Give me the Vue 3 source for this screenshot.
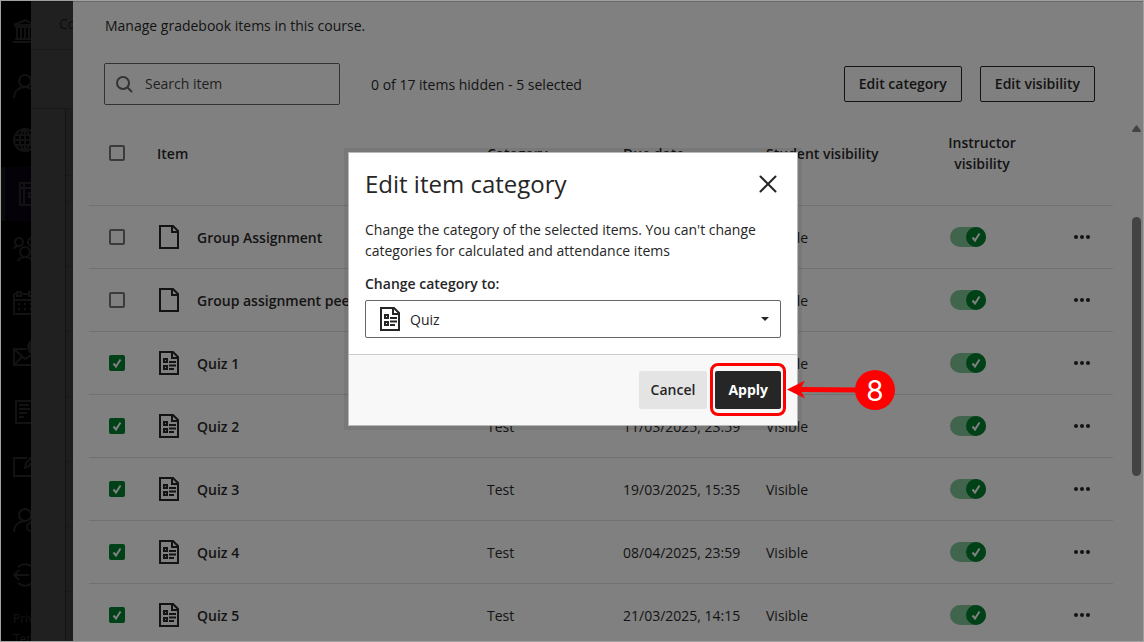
<template>
    <div class="screen">
        <nav class="rail" aria-label="Main">
            <ul class="rail__list">
                <li
                    v-for="item in railItems"
                    :key="item.name"
                    class="rail__item"
                    :class="{ 'rail__item--active': item.active }"
                >
                    <a href="#" class="rail__link" :aria-label="item.name">
                        <svg class="rail__icon" viewBox="0 0 24 24">
                            <path :d="item.path" />
                            <circle v-if="item.badge" class="rail__badge" cx="22" cy="2" r="8" />
                        </svg>
                    </a>
                </li>
            </ul>
            <a href="#" class="rail__text">Privacy</a>
            <a href="#" class="rail__text">Terms</a>
        </nav>

        <div class="course">
            <div class="course__title">Co</div>
            <div class="course__tabs"></div>
            <div class="course__grid">
                <div v-for="n in 9" :key="n" class="course__cell"></div>
            </div>
        </div>

        <main class="panel">
            <p class="panel__intro">Manage gradebook items in this course.</p>

            <div class="toolbar">
                <label class="search">
                    <svg class="search__icon" viewBox="0 0 18 18">
                        <circle cx="8" cy="8" r="6" />
                        <path d="M12.500 12.500 17 17" />
                    </svg>
                    <input
                        v-model="search"
                        class="search__input"
                        type="text"
                        placeholder="Search item"
                        aria-label="Search item"
                    />
                </label>
                <span class="toolbar__status">0 of 17 items hidden - {{ selectedCount }} selected</span>
                <div class="toolbar__actions">
                    <button type="button" class="outline-btn">Edit category</button>
                    <button type="button" class="outline-btn">Edit visibility</button>
                </div>
            </div>

            <div class="panel__body">
                <table class="items">
                    <colgroup>
                        <col class="col-check" />
                        <col />
                        <col class="col-category" />
                        <col class="col-due" />
                        <col class="col-student" />
                        <col class="col-instructor" />
                        <col class="col-menu" />
                    </colgroup>
                    <thead>
                        <tr>
                            <th class="cell-check">
                                <label class="check">
                                    <input type="checkbox" class="check__input" aria-label="Select all items" />
                                </label>
                            </th>
                            <th>Item</th>
                            <th>Category</th>
                            <th>Due date</th>
                            <th>Student visibility</th>
                            <th><span class="items__wrap">Instructor visibility</span></th>
                            <th></th>
                        </tr>
                    </thead>
                    <tbody>
                        <tr v-for="row in rows" :key="row.name">
                            <td class="cell-check">
                                <label class="check">
                                    <input v-model="row.selected" type="checkbox" class="check__input" :aria-label="row.name" />
                                    <svg v-if="row.selected" class="check__mark" viewBox="0 0 16 16">
                                        <path d="M4.5 8.5 7 11.5 11.5 4.5" />
                                    </svg>
                                </label>
                            </td>
                            <td>
                                <div class="item">
                                    <svg class="doc-icon" viewBox="0 0 20 24">
                                        <path d="M1 1H14L19 6V23H1ZM13 1V7H19" />
                                        <path v-if="row.quiz" d="M5 8H8V11H5ZM5 15H8V18H5ZM10 11H17M10 14.500H17M10 18H15" />
                                    </svg>
                                    <span class="item__name">{{ row.name }}</span>
                                </div>
                            </td>
                            <td>{{ row.category }}</td>
                            <td>{{ row.due }}</td>
                            <td>Visible</td>
                            <td class="cell-toggle">
                                <label class="toggle">
                                    <input
                                        v-model="row.shown"
                                        type="checkbox"
                                        role="switch"
                                        class="toggle__input"
                                        :aria-label="`${row.name} instructor visibility`"
                                    />
                                    <svg class="toggle__knob" viewBox="0 0 20 20">
                                        <circle cx="10" cy="10" r="10" />
                                        <path d="M6.500 10.500 9 13.500 13.500 6.500" />
                                    </svg>
                                </label>
                            </td>
                            <td class="cell-menu">
                                <button type="button" class="more" :aria-label="`More options for ${row.name}`">
                                    <svg class="more__icon" viewBox="0 0 16 4">
                                        <circle cx="2" cy="2" r="2" />
                                        <circle cx="8" cy="2" r="2" />
                                        <circle cx="14" cy="2" r="2" />
                                    </svg>
                                </button>
                            </td>
                        </tr>
                    </tbody>
                </table>

                <div class="scrollbar">
                    <svg class="scrollbar__arrow" viewBox="0 0 9 7">
                        <path d="M3.500 1Q4.500-.5 5.500 1L9 6Q9 7 8 7H1Q0 7 0 6Z" />
                    </svg>
                    <div class="scrollbar__thumb"></div>
                </div>
            </div>
        </main>

        <section class="dialog" role="dialog" aria-labelledby="dialog-title">
            <header class="dialog__header">
                <h2 id="dialog-title" class="dialog__title">Edit item category</h2>
                <button type="button" class="dialog__close" aria-label="Close">
                    <svg viewBox="0 0 18 18">
                        <path d="M1.500 1.500 16.500 16.500M16.500 1.500 1.500 16.500" />
                    </svg>
                </button>
            </header>
            <div class="dialog__body">
                <p class="dialog__text">
                    Change the category of the selected items. You can't change categories for calculated and attendance items
                </p>
                <label class="dialog__label" for="category">Change category to:</label>
                <div class="picker">
                    <select id="category" v-model="category" class="picker__select">
                        <option>Quiz</option>
                        <option>Test</option>
                    </select>
                    <svg class="doc-icon picker__icon" viewBox="0 0 20 24">
                        <path d="M1 1H14L19 6V23H1ZM13 1V7H19" />
                        <path d="M5 8H8V11H5ZM5 15H8V18H5ZM10 11H17M10 14.500H17M10 18H15" />
                    </svg>
                    <svg class="picker__caret" viewBox="0 0 8 4">
                        <path d="M0 0H8L4 4Z" />
                    </svg>
                </div>
            </div>
            <footer class="dialog__footer">
                <button type="button" class="btn">Cancel</button>
                <div class="step">
                    <button type="button" class="btn btn--primary">Apply</button>
                    <span class="step__ring"></span>
                    <div class="step__callout">
                        <svg class="step__arrow" viewBox="0 0 72 20">
                            <path d="M0 9.500 18 .5 14.500 7 72 7.500V12.500L14.500 12 18 18.500Z" />
                        </svg>
                        <span class="step__number">8</span>
                    </div>
                </div>
            </footer>
        </section>
    </div>
</template>

<script setup>
import { ref, computed } from 'vue'

const search = ref('')
const category = ref('Quiz')

const rows = ref([
    { name: 'Group Assignment', category: '', due: '', quiz: false, selected: false, shown: true },
    { name: 'Group assignment peer', category: '', due: '', quiz: false, selected: false, shown: true },
    { name: 'Quiz 1', category: 'Test', due: '', quiz: true, selected: true, shown: true },
    { name: 'Quiz 2', category: 'Test', due: '11/03/2025, 23:59', quiz: true, selected: true, shown: true },
    { name: 'Quiz 3', category: 'Test', due: '19/03/2025, 15:35', quiz: true, selected: true, shown: true },
    { name: 'Quiz 4', category: 'Test', due: '08/04/2025, 23:59', quiz: true, selected: true, shown: true },
    { name: 'Quiz 5', category: 'Test', due: '21/03/2025, 14:15', quiz: true, selected: true, shown: true }
])

const selectedCount = computed(() => rows.value.filter((row) => row.selected).length)

const railItems = [
    { name: 'Institution', path: 'M1 6 12 1 23 6ZM2 8H22M4 9V19M8 9V19M12 9V19M16 9V19M20 9V19M2 20H22M0 23H24' },
    { name: 'Profile', path: 'M6 7A6 6 0 1 0 18 7A6 6 0 1 0 6 7M1 24C1 17 6 13 12 13S23 17 23 24' },
    { name: 'Activity', path: 'M1 12A11 11 0 1 0 23 12A11 11 0 1 0 1 12M12 1V23M1 12H23M3 7H21M3 17H21M12 1C5 7 5 17 12 23M12 1C19 7 19 17 12 23' },
    { name: 'Courses', path: 'M7 1H29V23H7ZM11 1V23M7 6H29M20 11H16V15H20', active: true },
    { name: 'Organisations', path: 'M2 5A4 4 0 1 0 10 5A4 4 0 1 0 2 5M15 5A4 4 0 1 0 23 5A4 4 0 1 0 15 5M7 15A5 5 0 1 0 17 15A5 5 0 1 0 7 15M1 12C1 10 3 9 6 9M5 24C6 21 9 20 12 20S18 21 19 24' },
    { name: 'Calendar', path: 'M1 3H4M8 3H16M20 3H23V23H1V3M1 9H23M4 1H8V5H4ZM16 1H20V5H16ZM5 13H7M11 13H13M17 13H19M5 18H7M11 18H13M17 18H19' },
    { name: 'Messages', path: 'M13 4H1V20H23V12M2 5 12 14 20 9M2 19 9 12', badge: true },
    { name: 'Grades', path: 'M18 23H3V1H20V17M6 5H16M6 9H17M6 13H14M6 17H11M18 20H20' },
    { name: 'Assist', path: 'M14 4H1V22H23V13M12 14 13 9 21 1 24 4 16 12Z' },
    { name: 'Tools', path: 'M6 7A6 6 0 1 0 18 7A6 6 0 1 0 6 7M1 24C1 17 6 13 12 13M14 19A4 4 0 1 0 22 19A4 4 0 1 0 14 19M18 13V15' },
    { name: 'Sign out', path: 'M5 4C12-2 23 3 23 12S12 26 5 20M16 12H1M6 7 1 12 6 17' }
]
</script>

<style>
body {
    background: #808080;
}
</style>

<style scoped>
.screen {
    position: relative;
    display: grid;
    grid-template-columns: 30px 42px minmax(0, 1fr);
    box-sizing: border-box;
    height: 100vh;
    overflow: hidden;
    border: 1px solid #a0a0a0;
    color: #131313;
    font-family: "Open Sans", "Noto Sans", sans-serif;
    font-size: 14px;
    line-height: 21px;
}

button,
input,
select {
    font: inherit;
    color: inherit;
}

/* Side rail */
.rail {
    padding-top: 3px;
    overflow: hidden;
    background: #000;
}

.rail__list {
    display: grid;
    grid-auto-rows: 1fr;
    height: 598px;
    margin: 0 0 7px;
    padding: 0;
    list-style: none;
}

.rail__item {
    box-sizing: border-box;
    border-left: 4px solid #000;
}

.rail__item--active {
    border-left-color: #080c09;
    background: #040208;
}

.rail__link {
    display: flex;
    align-items: center;
    height: 100%;
    padding-left: 8px;
}

.rail__icon {
    flex: none;
    width: 24px;
    height: 24px;
    overflow: visible;
    fill: none;
    stroke: #121212;
    stroke-width: 2;
}

.rail__badge {
    fill: #121212;
    stroke: none;
}

.rail__text {
    display: block;
    padding-left: 12px;
    color: #151515;
    font-size: 12px;
    line-height: 20px;
    text-decoration: none;
}

/* Course page behind the panel */
.course {
    display: flex;
    flex-direction: column;
    overflow: hidden;
    border-top: 1px solid #181818;
    background: #202020;
}

.course__title {
    flex: none;
    height: 47px;
    padding-left: 28px;
    border-bottom: 1px solid #191919;
    color: #0c0c0c;
    line-height: 44px;
}

.course__tabs {
    flex: none;
    height: 58px;
    border-bottom: 1px solid #191919;
}

.course__grid {
    flex: 1;
    margin-left: 34px;
    border-left: 1px solid #131313;
    background: #1e1e1e;
}

.course__cell {
    box-sizing: border-box;
    height: 65px;
    border-bottom: 1px solid #191919;
}

.course__cell:first-child {
    height: 67px;
}

.course__cell:nth-child(2) {
    height: 26px;
}

/* Panel */
.panel {
    display: flex;
    flex-direction: column;
    min-width: 0;
    overflow: hidden;
    border-top: 1px solid #696969;
    background: #808080;
}

.panel__intro {
    margin: 0;
    padding: 13px 32px 0;
}

.toolbar {
    display: flex;
    align-items: center;
    margin-top: 27px;
    padding: 0 48px 0 31px;
}

.search {
    display: flex;
    align-items: center;
    box-sizing: border-box;
    width: 236px;
    height: 42px;
    padding: 0 10px;
    border: 1px solid #333;
    border-radius: 2px;
}

.search__icon {
    flex: none;
    width: 18px;
    height: 18px;
    overflow: visible;
    fill: none;
    stroke: #333;
    stroke-width: 2;
}

.search__input {
    flex: 1;
    min-width: 0;
    padding: 0 0 2px 12px;
    border: 0;
    outline: 0;
    background: none;
}

.search__input::placeholder {
    color: #1f1f1f;
    opacity: 1;
}

.toolbar__status {
    margin-left: 31px;
}

.toolbar__actions {
    display: flex;
    gap: 18px;
    margin-left: auto;
}

.outline-btn {
    height: 36px;
    padding: 0 14px 2px;
    border: 1px solid #131313;
    border-radius: 2px;
    background: none;
    font-weight: 600;
}

.panel__body {
    display: flex;
    flex: 1;
    min-height: 0;
    padding-left: 16px;
}

/* Items table */
.items {
    flex: 1;
    min-width: 0;
    height: max-content;
    table-layout: fixed;
    border-spacing: 0;
}

.col-check {
    width: 68px;
}

.col-category {
    width: 136px;
}

.col-due {
    width: 143px;
}

.col-student {
    width: 182px;
}

.col-instructor {
    width: 112px;
}

.col-menu {
    width: 53px;
}

.items th,
.items td {
    box-sizing: border-box;
    height: 63px;
    padding: 0;
    border-bottom: 1px solid #717171;
    text-align: left;
    vertical-align: middle;
    white-space: nowrap;
}

.items th {
    height: 101px;
    padding-bottom: 4px;
    font-weight: 600;
}

.items .cell-check {
    padding-left: 20px;
}

.items .cell-toggle {
    padding-left: 2px;
}

.items .cell-menu {
    padding-left: 14px;
}

.items__wrap {
    display: block;
    width: 68px;
    text-align: center;
    white-space: normal;
}

.item {
    display: flex;
    align-items: center;
    gap: 18px;
    padding-left: 2px;
}

.item__name {
    font-weight: 600;
}

.doc-icon {
    flex: none;
    width: 20px;
    height: 24px;
    fill: none;
    stroke: #131313;
    stroke-width: 2;
}

.check {
    position: relative;
    display: block;
    width: 16px;
    height: 16px;
}

.check__input {
    display: block;
    appearance: none;
    box-sizing: border-box;
    width: 16px;
    height: 16px;
    margin: 0;
    border: 2px solid #3b3b3b;
    border-radius: 2px;
}

.check__input:checked {
    border-color: #004117;
    background: #004117;
}

.check__mark {
    position: absolute;
    inset: 0;
    fill: none;
    stroke: #808080;
    stroke-width: 2;
    pointer-events: none;
}

.toggle {
    position: relative;
    display: block;
    width: 36px;
    height: 20px;
}

.toggle__input {
    display: block;
    appearance: none;
    width: 36px;
    height: 20px;
    margin: 0;
    border-radius: 10px;
    background: #41644c;
}

.toggle__knob {
    position: absolute;
    top: 0;
    right: 0;
    width: 20px;
    height: 20px;
    fill: #004117;
    pointer-events: none;
}

.toggle__knob path {
    fill: none;
    stroke: #808080;
    stroke-width: 2;
}

.more {
    display: flex;
    align-items: center;
    width: 16px;
    height: 20px;
    padding: 0;
    border: 0;
    background: none;
}

.more__icon {
    width: 16px;
    height: 4px;
    fill: #131313;
}

.scrollbar {
    display: flex;
    flex-direction: column;
    flex: none;
    align-items: flex-end;
    width: 28px;
    padding: 20px 2px 0 0;
}

.scrollbar__arrow {
    width: 9px;
    height: 7px;
    fill: #434343;
}

.scrollbar__thumb {
    width: 9px;
    height: 259px;
    margin-top: 85px;
    border-radius: 5px;
    background: #434343;
}

/* Dialog */
.dialog {
    position: absolute;
    top: 151px;
    left: calc(50% + 1px);
    box-sizing: border-box;
    width: 450px;
    transform: translateX(-50%);
    border: 1px solid #b8b8b8;
    background: #fff;
    box-shadow: 0 0 0 4px rgba(0, 0, 0, 0.06);
    color: #262626;
}

.dialog__header {
    display: flex;
    align-items: center;
    justify-content: space-between;
    padding: 15px 20px 0 16px;
}

.dialog__title {
    margin: 0;
    font-size: 24px;
    font-weight: 400;
    line-height: 32px;
}

.dialog__close {
    display: flex;
    padding: 0;
    border: 0;
    background: none;
}

.dialog__close svg {
    width: 18px;
    height: 18px;
    fill: none;
    stroke: #262626;
    stroke-width: 2;
    stroke-linecap: round;
}

.dialog__body {
    padding: 19px 16px 16px;
}

.dialog__text {
    margin: 0 0 12px;
}

.dialog__label {
    display: block;
    margin-bottom: 6px;
    font-weight: 600;
}

.picker {
    position: relative;
}

.picker__select {
    display: block;
    appearance: none;
    width: 100%;
    height: 38px;
    padding: 0 44px;
    border: 1px solid #666;
    border-radius: 2px;
    background: #fff;
}

.picker__icon {
    position: absolute;
    top: 7px;
    left: 15px;
    stroke: #262626;
    pointer-events: none;
}

.picker__caret {
    position: absolute;
    top: 17px;
    right: 12px;
    width: 8px;
    height: 4px;
    fill: #262626;
    pointer-events: none;
}

.dialog__footer {
    display: flex;
    justify-content: flex-end;
    gap: 8px;
    padding: 16px;
    border-top: 1px solid #ccc;
    background: #f8f8f8;
}

.btn {
    display: block;
    height: 38px;
    padding: 0 12px 2px;
    border: 0;
    border-radius: 2px;
    background: #e4e4e4;
    font-weight: 600;
}

.btn--primary {
    padding: 0 13px 2px;
    background: #262626;
    color: #fff;
    font-weight: 700;
}

/* Numbered step marker over the Apply button */
.step {
    position: relative;
}

.step__ring {
    position: absolute;
    inset: -8px -5px -7px -5px;
    border: 3px solid #f00;
    border-radius: 8px;
    pointer-events: none;
}

.step__callout {
    position: absolute;
    top: -1px;
    left: 100%;
    display: flex;
    align-items: center;
    padding-left: 6px;
}

.step__arrow {
    width: 72px;
    height: 20px;
    fill: #f00;
}

.step__number {
    width: 40px;
    height: 40px;
    margin-left: -4px;
    border-radius: 50%;
    background: #f00;
    color: #fff;
    font-family: Inter, sans-serif;
    font-size: 28px;
    line-height: 42px;
    text-align: center;
}
</style>
